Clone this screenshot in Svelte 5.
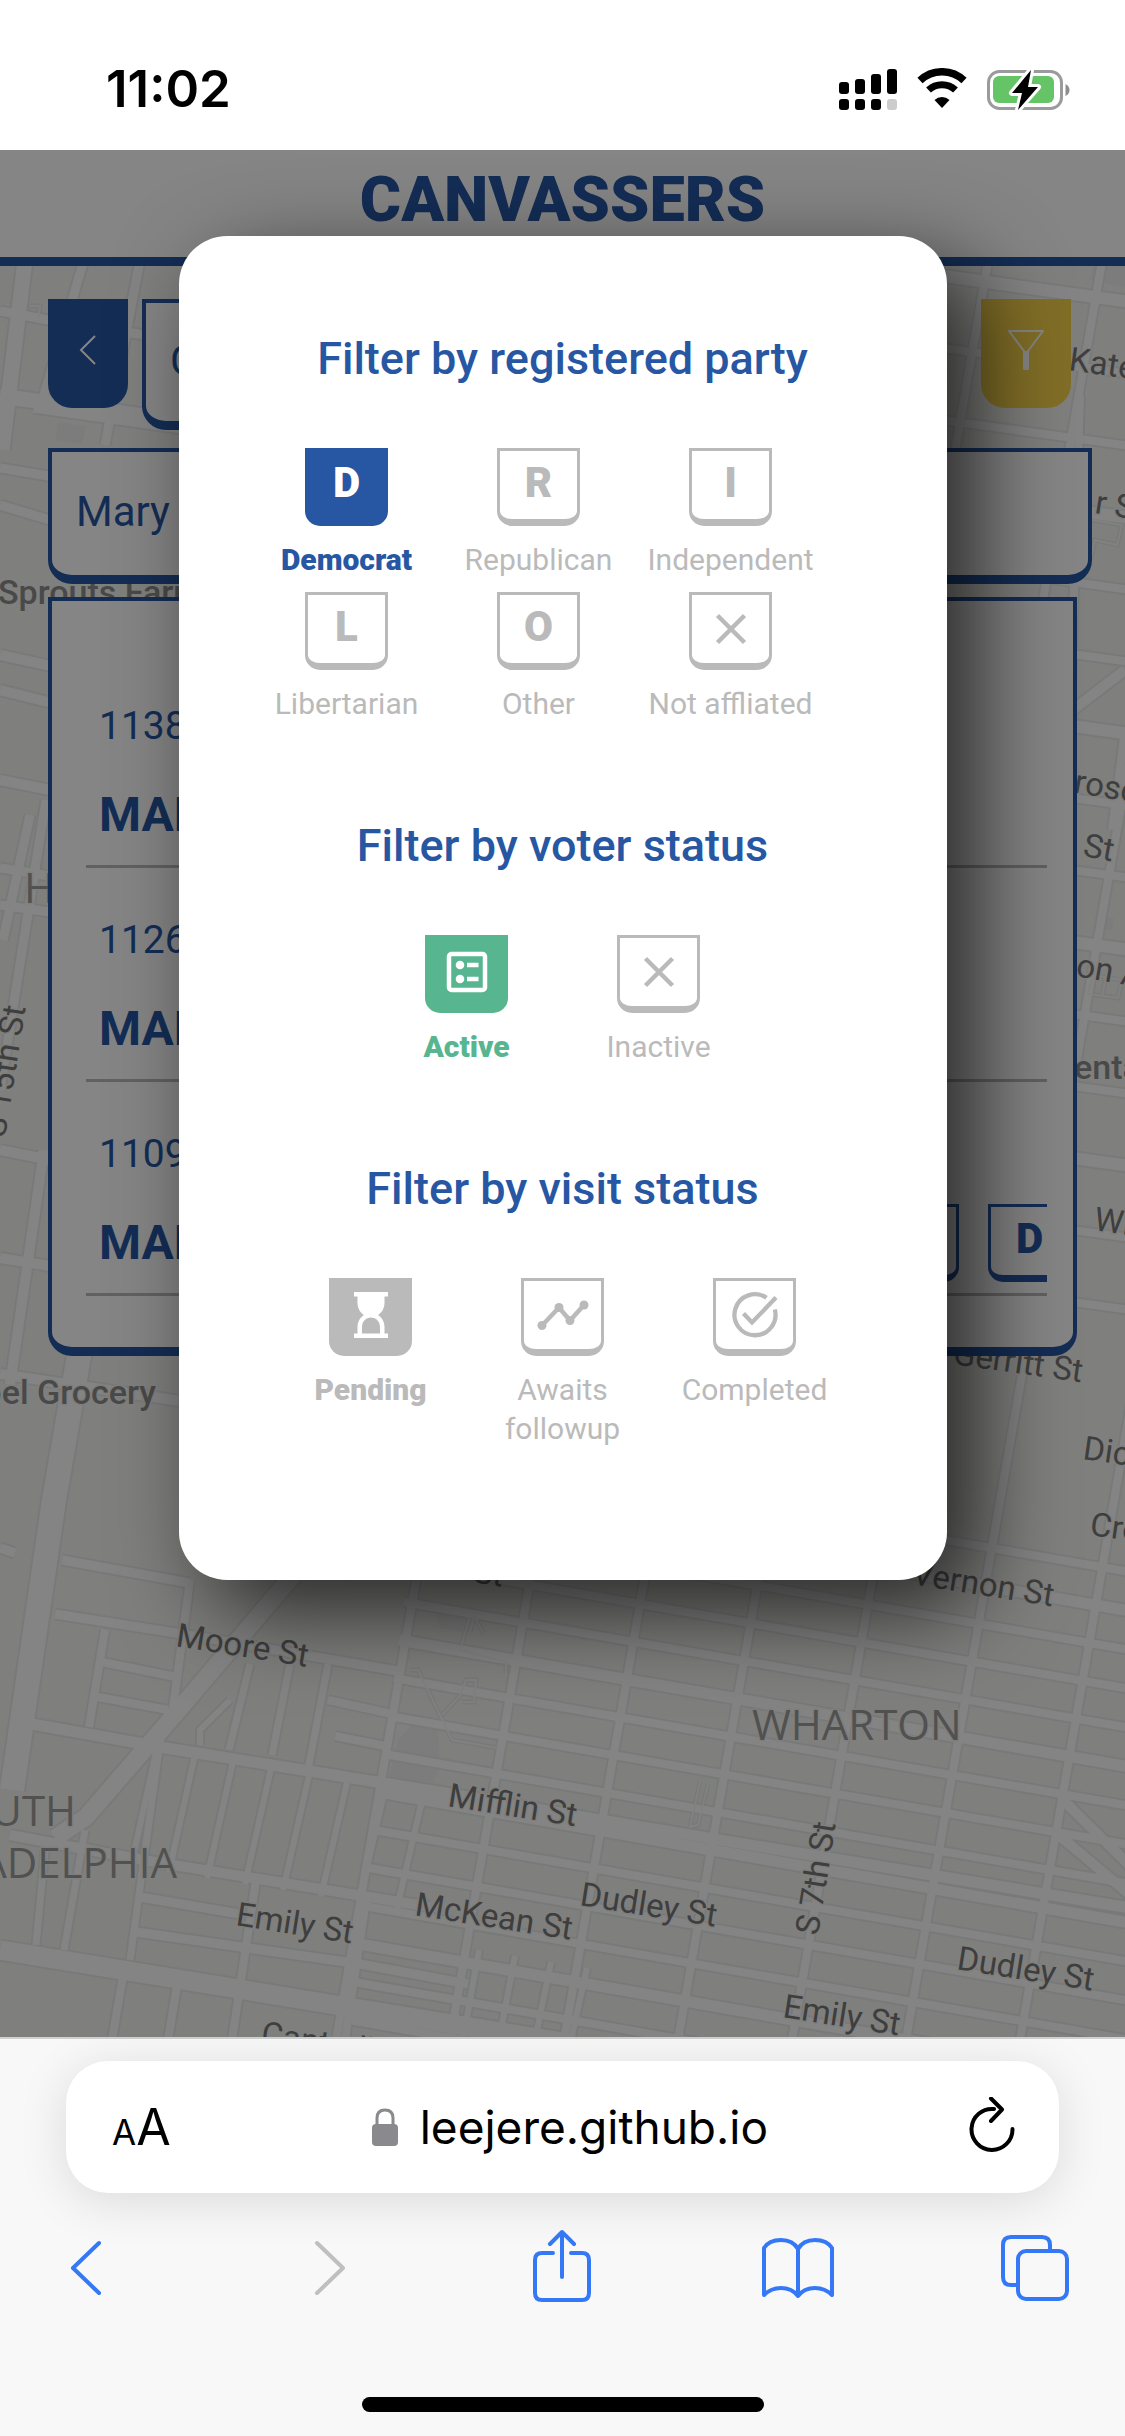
<script>
  let party = $state('Democrat');
  let voter = $state('Active');
  let visit = $state('Pending');
  let query = $state('Choose');
  let name = $state('Mary');

  const parties = [
    { label: 'Democrat', letter: 'D' },
    { label: 'Republican', letter: 'R' },
    { label: 'Independent', letter: 'I' },
    { label: 'Libertarian', letter: 'L' },
    { label: 'Other', letter: 'O' },
    { label: 'Not affliated', icon: 'cross' }
  ];
  const voterStates = [
    { label: 'Active', icon: 'ballot' },
    { label: 'Inactive', icon: 'cross' }
  ];
  const visitStates = [
    { label: 'Pending', icon: 'hourglass' },
    { label: 'Awaits followup', icon: 'trend' },
    { label: 'Completed', icon: 'done' }
  ];

  const voters = [
    { number: '1138', name: 'MARY', badges: [] },
    { number: '1126', name: 'MARY', badges: [] },
    { number: '1109', name: 'MARY', badges: ['A', 'D'] }
  ];

  // Street grid: north-south and east-west roads share one tilt.
  const roads = [];
  for (let i = -1; i < 9; i++) {
    const x = 416 + i * 114;
    if (i < 0) roads.push({ d: `M${x + 240} 250L${x + 80} 1140`, w: 8 });
    else roads.push({ d: `M${x + 232} 250L${x - 80} 2040`, w: 8 });
  }
  for (let i = 0; i < 16; i++) {
    const y = 1450 + i * 38;
    roads.push({ d: `M${424 - i * 5} ${y}L1130 ${y + 122 + i}`, w: i % 4 === 1 ? 11 : 8 });
  }
  for (let i = 0; i < 15; i++) {
    const y = 270 + i * 72;
    roads.push({ d: `M900 ${y}L1130 ${y + 32}`, w: i % 3 === 0 ? 12 : 8 });
  }
  for (let i = 0; i < 8; i++) {
    const x = 158 + i * 38;
    roads.push({ d: `M${x} ${1743 + i * 7}L${x - 27} ${1866 + i * 6}`, w: 6 });
  }
  for (let i = 0; i < 4; i++) {
    const x = 463 + i * 36;
    roads.push({ d: `M${x + 16} ${1950 + i * 6}L${x} 2040`, w: 6 });
  }
  const extraRoads = [
    ['M25 260L2 450M0 396L200 424', 15],
    ['M0 311L48 320L190 342M0 468L60 478M0 505L60 523', 9],
    ['M84 260L40 408M140 260L105 445M34 408L190 430', 9],
    ['M0 655L60 668M0 690L60 705M0 780L60 792', 10],
    ['M46 800L0 1090M30 815L3 940M0 868L50 876M0 905L50 912', 9],
    ['M0 1150L50 1160M44 1150L10 1385M0 1258L50 1266M0 1374L200 1404', 10],
    ['M80 1350L54 1500L12 1790', 24],
    ['M0 1548L15 1553M62 1560L190 1583M55 1614L176 1633L404 1672', 9],
    ['M105 1630L89 1727M190 1580L172 1716M102 1662L176 1677M98 1697L168 1710', 8],
    ['M250 1664L229 1750M290 1664L272 1755M328 1664L308 1770', 7],
    ['M328 1700L392 1714M335 1736L390 1747', 8],
    ['M306 1560L170 1720L86 1817L55 1838', 17],
    ['M200 1745L200 1730L230 1700', 6],
    ['M32 1724L160 1747L445 1793L600 1820L1130 1908', 11],
    ['M10 1835L143 1860L430 1907', 10],
    ['M161 1735L130 1960M85 1830L64 1950M45 1850L36 1945', 7],
    ['M140 1897L240 1914M136 1932L360 1964L468 1984', 9],
    ['M256 1880L232 2040M366 1900L345 2040M124 1970L112 2040M178 1980L168 2040', 8],
    ['M0 1950L574 2044', 19],
    ['M1063 1800L1130 1866M1055 1832L1130 1895M1125 670L1070 712', 10],
    ['M1080 395L1060 1040M1125 730L1112 830', 8]
  ];
  for (const [d, w] of extraRoads) roads.push({ d, w });

  const footpaths = [
    'M410 1670L418 1670L452 1740L498 1748M442 1715L460 1696L466 1680L476 1680L474 1702L462 1702',
    'M470 1632L474 1616L484 1634M470 1616L460 1650L506 1662L506 1674',
    'M700 1782L690 1827L698 1825L708 1784',
    'M30 306L40 306L38 320M1093 975L1122 980L1118 998L1088 994ZM1106 977L1102 996',
    'M1092 520L1122 525L1117 545L1095 540L1091 558'
  ];

  const streets = [
    ['Kater St', 1068, 370, 8],
    ['r St', 1094, 513, 9],
    ['rose St', 1073, 792, 10],
    ['St', 1082, 856, 10],
    ['on Ave', 1075, 976, 10],
    ['Wharton St', 1093, 1230, 8],
    ['Gerritt St', 952, 1364, 8],
    ['Dickinson St', 1082, 1459, 8],
    ['Cross St', 1089, 1535, 8],
    ['Vernon St', 911, 1584, 9],
    ['St', 472, 1582, 9],
    ['Moore St', 175, 1646, 9],
    ['Mifflin St', 447, 1806, 9],
    ['Emily St', 235, 1925, 9],
    ['McKean St', 414, 1915, 9],
    ['Dudley St', 579, 1905, 9],
    ['Dudley St', 956, 1969, 9],
    ['Emily St', 782, 2017, 9],
    ['Cantrell St', 260, 2044, 9],
    ['S 7th St', 818, 1936, -81],
    ['S 15th St', 5, 1138, -81]
  ];
</script>

{#snippet glyph(icon)}
  {#if icon === 'cross'}
    <svg class="glyph" viewBox="0 0 48 48" aria-hidden="true">
      <path d="M10.500 10.500L37.500 37.500M37.500 10.500L10.500 37.500" fill="none" stroke="currentColor" stroke-width="4.500" />
    </svg>
  {:else if icon === 'ballot'}
    <svg class="glyph" viewBox="0 0 48 48" aria-hidden="true">
      <rect x="6" y="6" width="36" height="36" rx="2.500" fill="none" stroke="currentColor" stroke-width="4.500" />
      <circle cx="17" cy="17" r="4.300" fill="currentColor" />
      <circle cx="17" cy="31" r="4.300" fill="currentColor" />
      <path d="M24 17H35.500M24 31H35.500" fill="none" stroke="currentColor" stroke-width="4.500" />
    </svg>
  {:else if icon === 'hourglass'}
    <svg class="glyph" viewBox="0 0 48 48" aria-hidden="true">
      <path
        d="M7 1H41V5.500H37.500V12C37.500 17 35 21.500 31 24C35 26.500 37.500 31 37.500 36V42.500H41V47H7V42.500H10.500V36C10.500 31 13 26.500 17 24C13 21.500 10.500 17 10.500 12V5.500H7ZM15 42.500H33V36C33 30.500 29 26.500 24 26.500S15 30.500 15 36Z"
        fill="currentColor"
        fill-rule="evenodd"
      />
    </svg>
  {:else if icon === 'trend'}
    <svg class="glyph wide" viewBox="0 0 54 48" aria-hidden="true">
      <path d="M6 34.500L23 16.500L34 29.500L48 14" fill="none" stroke="currentColor" stroke-width="4.500" />
      <circle cx="6" cy="34.500" r="4.500" fill="currentColor" />
      <circle cx="23" cy="16.500" r="4.500" fill="currentColor" />
      <circle cx="34" cy="29.500" r="4.500" fill="currentColor" />
      <circle cx="48" cy="14" r="4.500" fill="currentColor" />
    </svg>
  {:else if icon === 'done'}
    <svg class="glyph" viewBox="0 0 48 48" aria-hidden="true">
      <path d="M35.500 6.800A20.500 20.500 0 1 0 43.800 18.500" fill="none" stroke="currentColor" stroke-width="4.300" />
      <path d="M12.500 22.500L21 31.500L45 6.500" fill="none" stroke="currentColor" stroke-width="4.300" />
    </svg>
  {/if}
{/snippet}

{#snippet option(item, selected, tone, pick)}
  <button type="button" class="option {tone}" class:selected aria-pressed={selected} onclick={pick}>
    <span class="tile" class:lettered={item.letter}>
      {#if item.letter}{item.letter}{:else}{@render glyph(item.icon)}{/if}
    </span>
    <span class="caption">{item.label}</span>
  </button>
{/snippet}

<div class="phone">
  <div class="status">
    <time>11:02</time>
    <div class="indicators">
      <svg width="58" height="42" viewBox="0 0 58 42" aria-label="Signal">
        <rect x="0" y="14" width="10" height="12" rx="3" />
        <rect x="16" y="11" width="10" height="15" rx="3" />
        <rect x="32" y="6" width="10" height="20" rx="3" />
        <rect x="48" y="1" width="10" height="25" rx="3" />
        <rect x="0" y="31" width="10" height="11" rx="3" />
        <rect x="16" y="31" width="10" height="11" rx="3" />
        <rect x="32" y="31" width="10" height="11" rx="3" />
        <rect x="48" y="31" width="10" height="11" rx="3" fill="#ccc" />
      </svg>
      <svg width="52" height="42" viewBox="0 0 52 42" aria-label="Wi-Fi">
        <path d="M4 12.500A32 32 0 0 1 48 12.500" fill="none" stroke="#000" stroke-width="7.500" />
        <path d="M12.500 22A20 20 0 0 1 39.500 22" fill="none" stroke="#000" stroke-width="7" />
        <path d="M26 40L18.500 32A11 11 0 0 1 33.500 32Z" />
      </svg>
      <svg width="84" height="42" viewBox="0 0 84 42" aria-label="Battery charging">
        <rect x="1.500" y="3.500" width="73" height="37" rx="11" fill="#fff" stroke="#9b9b9b" stroke-width="3" />
        <rect x="6" y="8" width="61" height="27" rx="6" fill="#65c466" />
        <path d="M78.500 16Q82.500 18 82.500 22T78.500 28Z" fill="#8e8e8e" />
        <path d="M44 2L25 25H35L31 42L51 19H41Z" stroke="#fff" stroke-width="6" stroke-linejoin="round" />
        <path d="M44 2L25 25H35L31 42L51 19H41Z" />
      </svg>
    </div>
  </div>

  <main class="page">
    <header><h1>CANVASSERS</h1></header>
    <div class="workspace">
      <svg class="map" viewBox="0 266 1125 1771" preserveAspectRatio="xMinYMin slice" aria-hidden="true">
        <rect x="0" y="266" width="1125" height="1771" fill="#f4f4f0" />
        <path
          d="M415 1722L438 1730L440 1768L432 1782L388 1780L398 1740ZM58 422L86 426L82 444L56 440ZM434 1612L466 1618L462 1632L440 1628ZM708 2000L740 2006L736 2018L706 2012ZM1098 916L1114 918L1112 930L1094 928ZM1094 262H1130V288L1090 280Z"
          fill="#ebedeb"
        />
        {#each roads as r}<path d={r.d} fill="none" stroke="#e6e9e8" stroke-width={r.w + 4} />{/each}
        {#each footpaths as d}<path {d} fill="none" stroke="#e6e9e8" stroke-width="5" />{/each}
        {#each roads as r}<path d={r.d} fill="none" stroke="#fdfdfd" stroke-width={r.w} />{/each}
        {#each footpaths as d}<path {d} fill="none" stroke="#f8f8f7" stroke-width="2" />{/each}
        <g class="street">
          {#each streets as [text, x, y, turn]}
            <text transform="translate({x} {y}) rotate({turn})">{text}</text>
          {/each}
        </g>
        <g class="place">
          <text x="-2" y="604">Sprouts Farmers</text>
          <text x="156" y="1404" text-anchor="end">Chapel Grocery</text>
          <text x="1074" y="1079">ental</text>
        </g>
        <g class="area">
          <text x="24" y="903">H</text>
          <text x="752" y="1740">WHARTON</text>
          <text x="76" y="1826" text-anchor="end">SOUTH</text>
          <text x="177" y="1878" text-anchor="end">PHILADELPHIA</text>
        </g>
      </svg>

      <div class="controls">
        <div class="search-row">
          <button type="button" class="back" aria-label="Back">
            <svg width="20" height="32" viewBox="0 0 20 32"><path d="M17 2L3 16L17 30" fill="none" stroke="#fff" stroke-width="2" /></svg>
          </button>
          <input class="search" aria-label="Search field" bind:value={query} />
          <button type="button" class="filter" aria-label="Filter">
            <svg width="38" height="42" viewBox="0 0 38 42">
              <path d="M2 2H36L21 22V40H17V22Z" fill="none" stroke="#fff" stroke-width="2" stroke-linejoin="round" />
              <path d="M19 22V40" stroke="#fff" stroke-width="3" />
            </svg>
          </button>
        </div>
        <input class="name" aria-label="Voter name" bind:value={name} />
        <ul class="voters">
          {#each voters as v}
            <li>
              <span class="number">{v.number}</span>
              <div class="person">
                <strong>{v.name}</strong>
                {#if v.badges.length}
                  <div class="badges">
                    {#each v.badges as b}<span class="tile lettered">{b}</span>{/each}
                  </div>
                {/if}
              </div>
            </li>
          {/each}
        </ul>
      </div>
    </div>

    <div class="overlay">
      <div class="dialog" role="dialog" aria-label="Filters">
        <section>
          <h2>Filter by registered party</h2>
          <div class="options start">
            {#each parties as p}
              {@render option(p, party === p.label, 'blue', () => (party = p.label))}
            {/each}
          </div>
        </section>
        <section>
          <h2>Filter by voter status</h2>
          <div class="options">
            {#each voterStates as s}
              {@render option(s, voter === s.label, 'green', () => (voter = s.label))}
            {/each}
          </div>
        </section>
        <section>
          <h2>Filter by visit status</h2>
          <div class="options">
            {#each visitStates as s}
              {@render option(s, visit === s.label, 'gray', () => (visit = s.label))}
            {/each}
          </div>
        </section>
      </div>
    </div>
  </main>

  <footer>
    <div class="address">
      <button type="button" class="text-size" aria-label="Text size"><span class="small">A</span><span>A</span></button>
      <a class="url" href="#top">
        <svg width="26" height="40" viewBox="0 0 26 40" aria-hidden="true">
          <rect x="0" y="17" width="26" height="22" rx="4" fill="#8a8a8e" />
          <path d="M5 18V11Q5 3 13 3T21 11V18" fill="none" stroke="#8a8a8e" stroke-width="3" />
        </svg>
        leejere.github.io
      </a>
      <button type="button" aria-label="Reload">
        <svg width="48" height="60" viewBox="0 0 48 60">
          <path d="M25 12A20.500 20.500 0 1 0 43.500 32" fill="none" stroke="#000" stroke-width="4" stroke-linecap="round" />
          <path d="M22 1.500L33 12.500L22 24" fill="none" stroke="#000" stroke-width="4" stroke-linecap="round" stroke-linejoin="round" />
        </svg>
      </button>
    </div>
    <nav>
      <button type="button" aria-label="Previous page">
        <svg viewBox="0 0 96 80"><path d="M61 15L35 40L61 65" /></svg>
      </button>
      <button type="button" aria-label="Next page" disabled>
        <svg viewBox="0 0 96 80"><path d="M42 15L68 40L42 65" /></svg>
      </button>
      <button type="button" aria-label="Share">
        <svg viewBox="0 0 96 80">
          <path d="M40 25H29Q22 25 22 32V65Q22 72 29 72H69Q76 72 76 65V32Q76 25 69 25H58M49 49V5M37 16L49 4L61 16" />
        </svg>
      </button>
      <button type="button" aria-label="Bookmarks">
        <svg viewBox="0 0 96 80">
          <path d="M48 21Q43 12 31 12Q19 12 14 20V67Q21 60 31 60Q42 60 48 68Q54 60 65 60Q75 60 82 67V20Q77 12 65 12Q53 12 48 21ZM48 21V67" />
        </svg>
      </button>
      <button type="button" aria-label="Tabs">
        <svg viewBox="0 0 96 80">
          <path d="M30 57H24Q16 57 16 49V17Q16 9 24 9H55Q63 9 63 17V23" />
          <rect x="31" y="23" width="49" height="48" rx="8" />
        </svg>
      </button>
    </nav>
    <div class="home"></div>
  </footer>
</div>

<style>
  :global(body) {
    margin: 0;
    font-family: Roboto, 'Liberation Sans', sans-serif;
  }
  .phone {
    --blue: #2757a3;
    --green: #57b58f;
    --gray: #bababa;
    min-height: 100vh;
    display: flex;
    flex-direction: column;
    background: #fff;
  }
  button {
    padding: 0;
    border: 0;
    background: none;
    font: inherit;
    color: inherit;
    cursor: pointer;
  }
  h1,
  h2,
  ul {
    margin: 0;
    padding: 0;
  }
  svg {
    display: block;
    flex: none;
  }

  .status {
    height: 150px;
    box-sizing: border-box;
    padding: 27px 54px 0 106px;
    display: flex;
    align-items: center;
    justify-content: space-between;
  }
  time {
    font: 600 51px/60px Inter, sans-serif;
    color: #000;
  }
  .indicators {
    display: flex;
    gap: 19px;
  }

  .page {
    position: relative;
    flex: 1;
    display: flex;
    flex-direction: column;
    overflow: hidden;
  }
  header {
    height: 107px;
    box-sizing: content-box;
    border-bottom: 9px solid var(--blue);
    display: flex;
    align-items: flex-start;
    justify-content: center;
    background: #fff;
  }
  h1 {
    padding-top: 13px;
    font-size: 63px;
    line-height: 74px;
    font-weight: 900;
    color: var(--blue);
  }
  .workspace {
    position: relative;
    flex: 1;
  }
  .map {
    position: absolute;
    inset: 0;
    width: 100%;
    height: 100%;
  }
  .map text {
    paint-order: stroke;
    stroke: #f4f4f0;
    stroke-width: 3px;
    stroke-linejoin: round;
  }
  .street {
    font-size: 33px;
    fill: #777;
  }
  .place {
    font-size: 34px;
    font-weight: 500;
    fill: #8c8c8c;
  }
  .area {
    font-family: 'Open Sans', sans-serif;
    font-size: 42px;
    fill: #9c9c9c;
  }

  .controls {
    position: relative;
    padding: 33px 0 0 48px;
    display: flex;
    flex-direction: column;
  }
  .search-row {
    display: flex;
    align-items: flex-start;
    gap: 14px;
    margin: 0 54px 18px 0;
  }
  .back,
  .filter {
    flex: none;
    box-sizing: border-box;
    display: flex;
    align-items: center;
    justify-content: center;
    height: 109px;
    padding-bottom: 8px;
    border-radius: 0 0 24px 24px;
  }
  .back {
    width: 80px;
    background: var(--blue);
  }
  .filter {
    width: 90px;
    background: #f7d44c;
  }
  input {
    box-sizing: border-box;
    min-width: 0;
    border: 4px solid var(--blue);
    border-bottom-width: 9px;
    border-radius: 0 0 24px 24px;
    background: #fff;
    color: var(--blue);
    font: 42px/50px Roboto, sans-serif;
    padding: 0 24px 4px;
    outline: 0;
  }
  .search {
    flex: 1;
    height: 131px;
    margin-right: 40px;
  }
  .name {
    height: 136px;
    margin: 0 33px 13px 0;
  }
  .voters {
    list-style: none;
    margin-right: 48px;
    padding: 53px 26px 51px 34px;
    border: 4px solid var(--blue);
    border-bottom-width: 9px;
    border-radius: 0 0 24px 24px;
    background: #fff;
    color: var(--blue);
  }
  li {
    padding: 49px 0 11px 13px;
    border-bottom: 3px solid #bababa;
    overflow: hidden;
  }
  .number {
    display: block;
    font-size: 39px;
    line-height: 46px;
    margin-bottom: 27px;
  }
  .person {
    height: 78px;
    display: flex;
    align-items: center;
    justify-content: space-between;
  }
  strong {
    font-size: 48px;
    line-height: 56px;
    font-weight: 700;
  }
  .badges {
    display: flex;
    gap: 29px;
    margin-right: -24px;
  }

  .tile {
    box-sizing: border-box;
    width: 83px;
    height: 78px;
    display: flex;
    align-items: center;
    justify-content: center;
    border: 3px solid currentColor;
    border-bottom-width: 7px;
    border-radius: 0 0 15px 15px;
    font-size: 42px;
    line-height: 48px;
    font-weight: 900;
  }
  .lettered {
    padding-bottom: 4px;
  }
  .glyph {
    width: 48px;
    height: 48px;
  }
  .glyph.wide {
    width: 54px;
  }

  .overlay {
    position: absolute;
    inset: 0;
    display: flex;
    justify-content: center;
    align-items: flex-start;
    padding-top: 86px;
    background: rgba(0, 0, 0, 0.48);
  }
  .dialog {
    box-sizing: border-box;
    width: 768px;
    max-width: 100%;
    padding: 96px 72px 119px;
    display: flex;
    flex-direction: column;
    gap: 83px;
    border-radius: 48px;
    background: #fff;
    box-shadow: 30px 30px 90px rgba(0, 0, 0, 0.7);
  }
  h2 {
    margin-bottom: 63px;
    font-size: 45px;
    line-height: 53px;
    font-weight: 500;
    text-align: center;
    color: var(--blue);
  }
  .options {
    display: flex;
    flex-wrap: wrap;
    justify-content: center;
    align-items: flex-start;
  }
  .options.start {
    justify-content: flex-start;
  }
  .option {
    width: 192px;
    padding-bottom: 13px;
    display: flex;
    flex-direction: column;
    align-items: center;
    gap: 14px;
    color: var(--gray);
    font-size: 30px;
    line-height: 39px;
  }
  .selected .tile {
    background: currentColor;
    border-color: transparent;
    background-clip: border-box;
  }
  .selected .tile :global(svg) {
    color: #fff;
  }
  .selected .caption {
    font-weight: 900;
  }
  .selected.blue {
    color: var(--blue);
  }
  .selected.green {
    color: var(--green);
  }
  .selected.blue .tile {
    background: var(--blue);
    color: #fff;
  }

  footer {
    display: flex;
    flex-direction: column;
    padding: 22px 0 24px;
    border-top: 2px solid #d0d0d0;
    background: #f8f8f8;
  }
  .address {
    height: 132px;
    margin: 0 66px 35px;
    padding: 0 42px 0 46px;
    display: flex;
    align-items: center;
    justify-content: space-between;
    border-radius: 42px;
    background: #fff;
    box-shadow: 0 8px 50px rgba(0, 0, 0, 0.12);
    color: #000;
    font-family: Inter, sans-serif;
  }
  .text-size {
    padding-top: 4px;
    font-size: 50px;
    line-height: 60px;
  }
  .small {
    font-size: 35px;
  }
  .url {
    display: flex;
    align-items: center;
    gap: 22px;
    font-size: 46px;
    line-height: 60px;
    color: inherit;
    text-decoration: none;
  }
  nav {
    display: flex;
    justify-content: space-between;
    padding: 0 42px 0 38px;
  }
  nav button {
    width: 96px;
    height: 80px;
    color: #3478f6;
  }
  nav button:disabled {
    color: #bfbfc0;
  }
  nav svg {
    width: 96px;
    height: 80px;
    fill: none;
    stroke: currentColor;
    stroke-width: 4px;
    stroke-linecap: round;
    stroke-linejoin: round;
  }
  .home {
    width: 402px;
    height: 15px;
    margin: 89px auto 0;
    border-radius: 8px;
    background: #000;
  }
</style>
